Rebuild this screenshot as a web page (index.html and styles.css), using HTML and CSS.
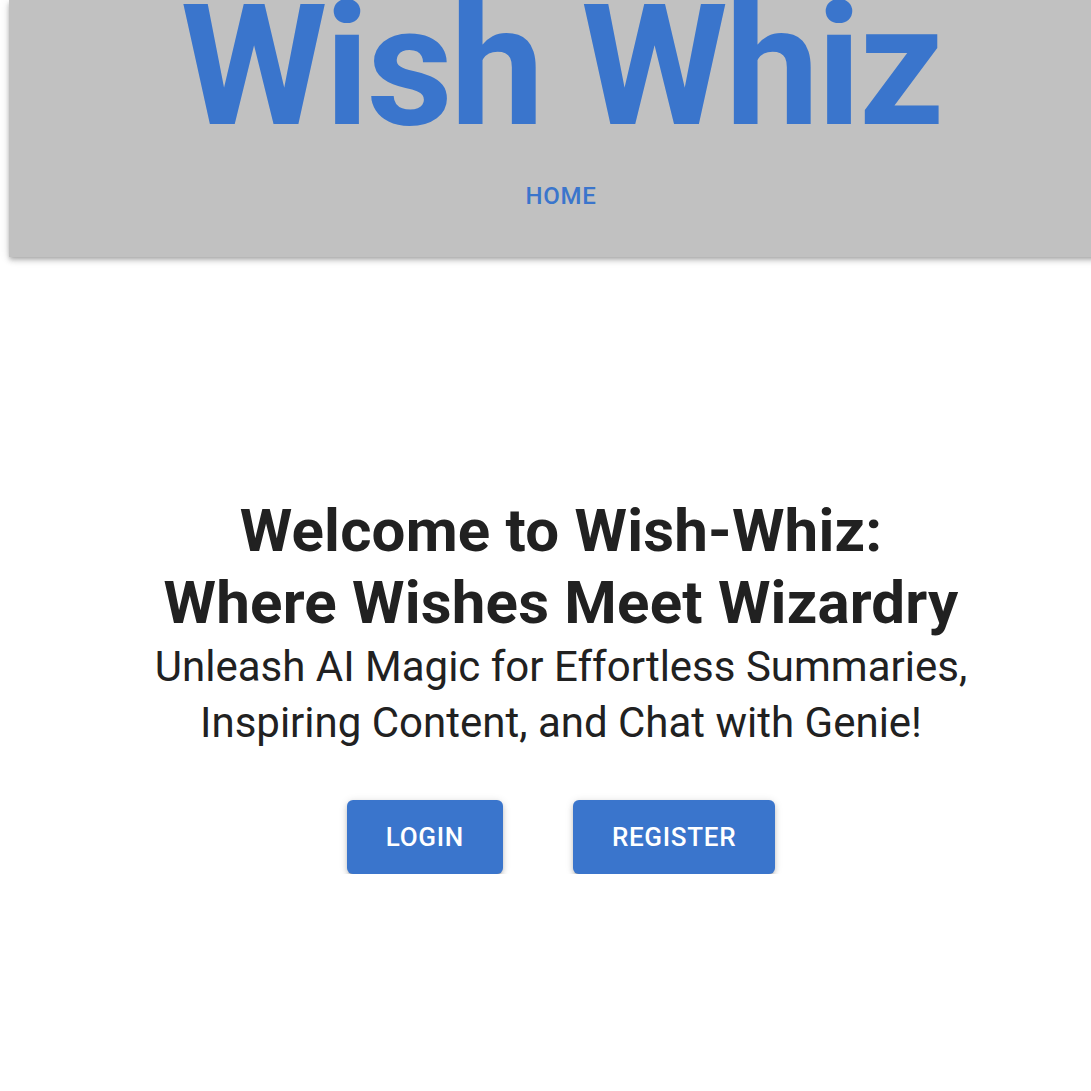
FILE: index.html
```html
<!DOCTYPE html>
<html lang="en">
<head>
<meta charset="utf-8">
<title>Wish Whiz</title>
<link rel="stylesheet" href="styles.css">
</head>
<body>
<div class="page">
  <header class="appbar">
    <h1 class="brand">Wish Whiz</h1>
    <nav class="nav">
      <a class="nav-link" href="#">HOME</a>
    </nav>
  </header>
  <main class="hero">
    <h2 class="hero-title">Welcome to Wish-Whiz:<br>Where Wishes Meet Wizardry</h2>
    <p class="hero-sub">Unleash AI Magic for Effortless Summaries,<br>Inspiring Content, and Chat with Genie!</p>
    <div class="actions">
      <a class="btn" href="#">LOGIN</a>
      <a class="btn" href="#">REGISTER</a>
    </div>
  </main>
</div>
</body>
</html>
```

FILE: styles.css
```css
html, body {
  margin: 0;
  padding: 0;
  background: #ffffff;
  overflow: hidden;
}

body {
  font-family: Roboto, "Liberation Sans", Arial, sans-serif;
  color: #212121;
}

.page {
  margin-left: 9px;
  width: 1104px;
}

.appbar {
  background: #c1c1c1;
  height: 257px;
  display: flex;
  flex-direction: column;
  align-items: center;
  box-shadow: 0 2px 4px -1px rgba(0,0,0,0.2), 0 4px 5px 0 rgba(0,0,0,0.14), 0 1px 10px 0 rgba(0,0,0,0.12);
  overflow: hidden;
}

.brand {
  margin: -17px 0 0 0;
  font-size: 168px;
  line-height: 1;
  font-weight: 700;
  letter-spacing: -0.0156em;
  color: #3a75cc;
  white-space: nowrap;
}

.nav {
  margin-top: 29px;
  display: flex;
  justify-content: center;
}

.nav-link {
  color: #3a75cc;
  text-decoration: none;
  font-size: 24px;
  font-weight: 500;
  letter-spacing: 0.69px;
  line-height: 32px;
}

.hero {
  display: flex;
  flex-direction: column;
  align-items: center;
  text-align: center;
  padding-top: 238px;
}

.hero-title {
  margin: 0;
  font-size: 60px;
  line-height: 72px;
  font-weight: 700;
  letter-spacing: 0.2px;
  color: #212121;
}

.hero-sub {
  margin: 0;
  font-size: 42px;
  line-height: 56px;
  font-weight: 400;
  color: #212121;
}

.actions {
  margin-top: 49px;
  display: flex;
  gap: 70px;
}

.btn {
  display: flex;
  align-items: center;
  justify-content: center;
  height: 74px;
  padding: 0 39px;
  background: #3a75cc;
  color: #ffffff;
  text-decoration: none;
  font-size: 26px;
  font-weight: 500;
  letter-spacing: 0.7px;
  border-radius: 6px;
  box-shadow: 0 3px 2px -2px rgba(0,0,0,0.25), 0 3px 5px 0 rgba(0,0,0,0.16), 0 1px 9px 0 rgba(0,0,0,0.12);
}
```
